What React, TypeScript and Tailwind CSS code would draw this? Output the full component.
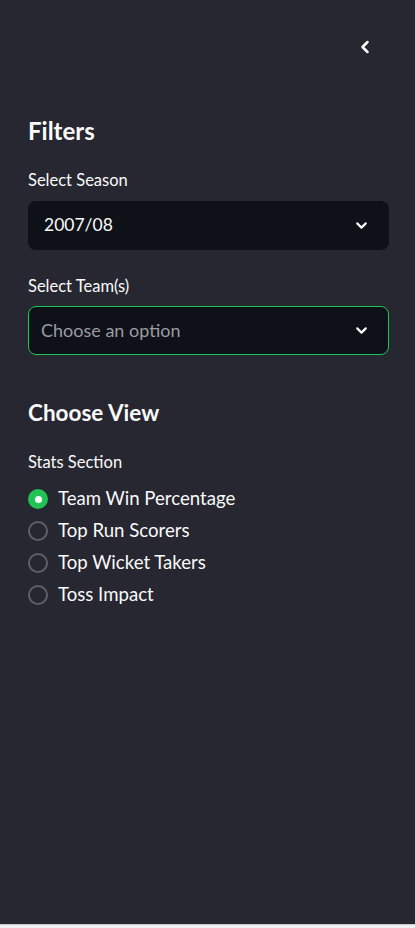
import { ChevronDown, ChevronLeft } from "lucide-react";

const views = ["Team Win Percentage", "Top Run Scorers", "Top Wicket Takers", "Toss Impact"];

function Radio({ label, checked }: { label: string; checked?: boolean }) {
  return (
    <div className="flex h-8 items-center gap-[10px]">
      {checked ? (
        <span className="flex h-5 w-5 items-center justify-center rounded-full bg-[#21c354]">
          <span className="h-[7px] w-[7px] rounded-full bg-white" />
        </span>
      ) : (
        <span className="h-5 w-5 rounded-full border-2 border-[#5f6069]" />
      )}
      <span className="text-[18.6px] text-[#fafafa]">{label}</span>
    </div>
  );
}

export default function App() {
  return (
    <div className="flex h-[928px] w-[415px] flex-col font-['Lato','Noto_Sans',sans-serif]">
      <aside className="h-[924px] bg-[#262730] pr-[26px] pl-7">
        <div className="flex justify-end pt-[37px] pr-[14px]">
          <ChevronLeft className="h-[20px] w-[20px] text-white" strokeWidth={3} />
        </div>

        <h2 className="mt-[62px] text-[24px] font-bold leading-none text-[#fafafa]">Filters</h2>

        <p className="mt-[29px] text-[16.5px] leading-none text-[#fafafa]">Select Season</p>
        <div className="mt-[12px] flex h-[49px] items-center justify-between rounded-lg bg-[#0e1117] pr-[19px] pl-4">
          <span className="text-[17.5px] text-[#fafafa]">2007/08</span>
          <ChevronDown className="h-[17px] w-[17px] text-white" strokeWidth={3} />
        </div>

        <p className="mt-[28px] text-[16.5px] leading-none text-[#fafafa]">Select Team(s)</p>
        <div className="mt-[12px] flex h-[49px] items-center justify-between rounded-lg border border-[#21c354] bg-[#0e1117] pr-[18px] pl-3">
          <span className="text-[18px] text-[#9b9ca2]">Choose an option</span>
          <ChevronDown className="h-[17px] w-[17px] text-white" strokeWidth={3} />
        </div>

        <h2 className="mt-[47px] text-[22.5px] font-bold leading-none text-[#fafafa]">Choose View</h2>

        <p className="mt-[29px] text-[16.5px] leading-none text-[#fafafa]">Stats Section</p>
        <div className="mt-[13px] flex flex-col">
          {views.map((v, i) => (
            <Radio key={v} label={v} checked={i === 0} />
          ))}
        </div>
      </aside>
      <div className="flex-1 border-t border-[#c8c8c8] bg-[#f0f0f0]" />
    </div>
  );
}
